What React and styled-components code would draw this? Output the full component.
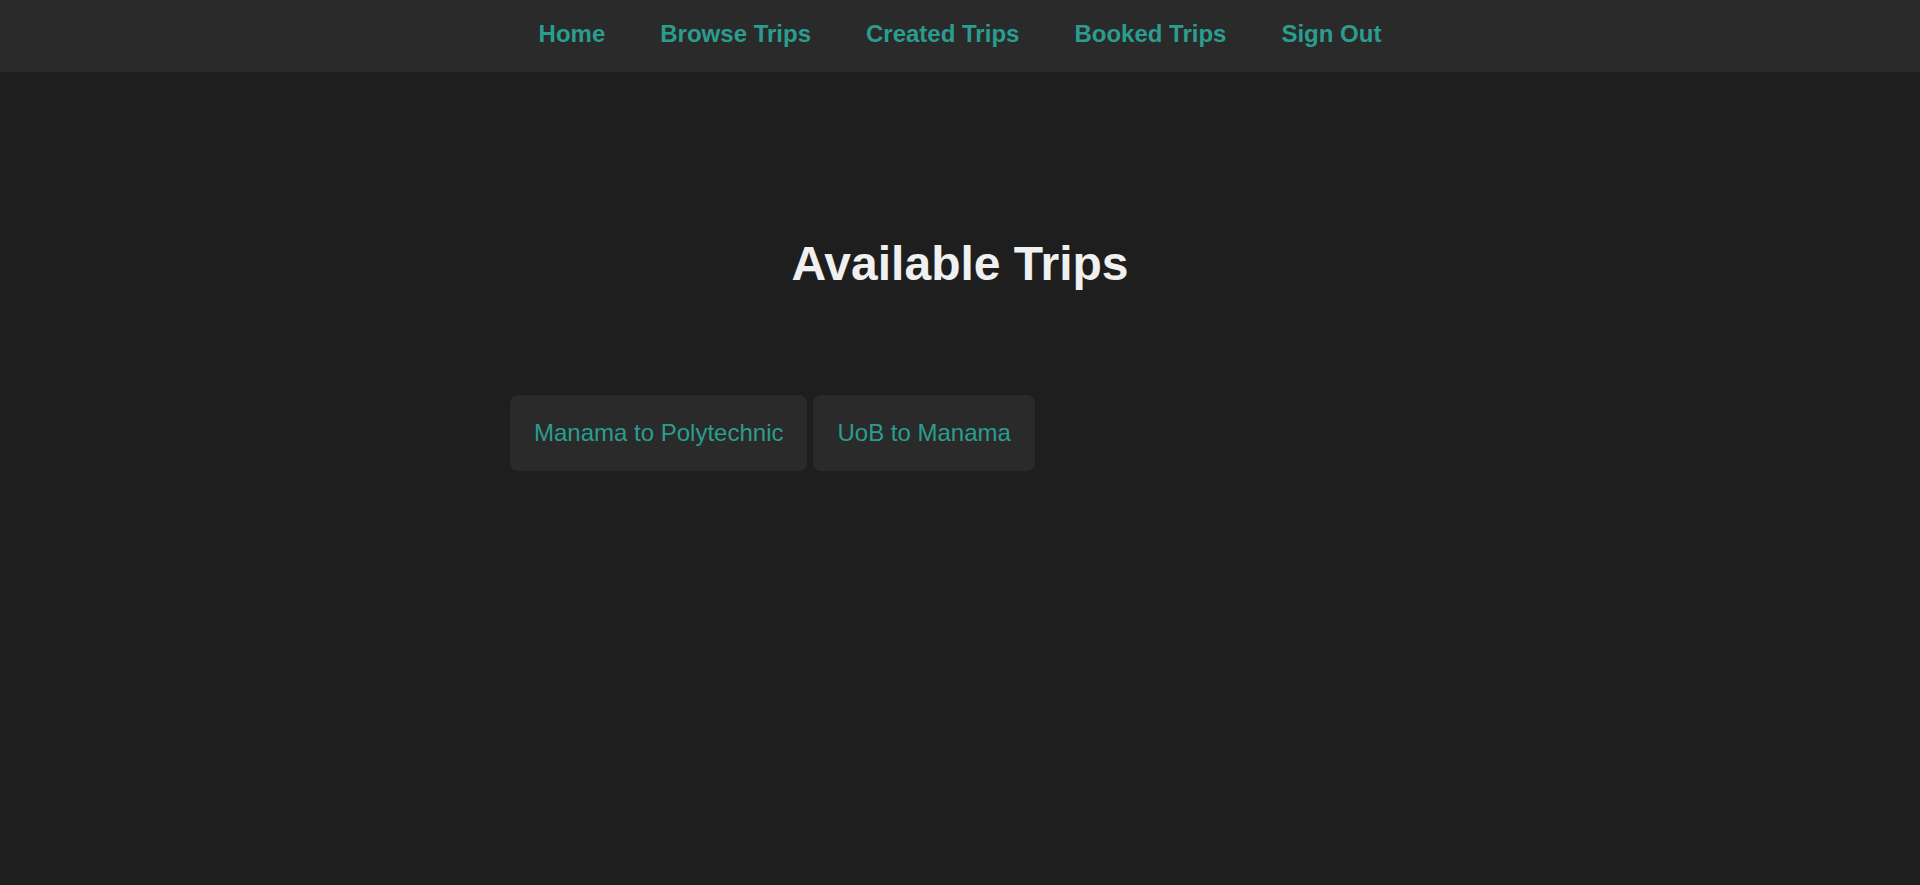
import React from "react";
import styled, { createGlobalStyle } from "styled-components";

const GlobalStyle = createGlobalStyle`
  html, body {
    margin: 0;
    padding: 0;
    background: #1e1e1e;
    font-family: "Liberation Sans", Arial, sans-serif;
  }
  #root {
    min-height: 100vh;
  }
`;

const Page = styled.div`
  min-height: 100vh;
  background: #1e1e1e;
  color: #f0f0f0;
`;

const NavBar = styled.nav`
  display: flex;
  justify-content: center;
  align-items: center;
  gap: 55px;
  padding: 20px 0 24px;
  background: #2a2a2a;
`;

const NavLink = styled.a`
  color: #2a9d8f;
  font-size: 24px;
  font-weight: 700;
  text-decoration: none;
  line-height: normal;
  cursor: pointer;
`;

const Main = styled.main`
  width: 900px;
  margin: 0 auto;
  padding-top: 164px;
`;

const Title = styled.h1`
  margin: 0 0 104px;
  text-align: center;
  font-size: 48px;
  font-weight: 700;
  line-height: normal;
  color: #f0f0f0;
`;

const TripList = styled.div`
  display: flex;
  flex-wrap: wrap;
  gap: 6px;
`;

const TripCard = styled.div`
  background: #2a2a2a;
  border-radius: 8px;
  padding: 24px;
  color: #2a9d8f;
  font-size: 24px;
  line-height: normal;
  cursor: pointer;
`;

const links = ["Home", "Browse Trips", "Created Trips", "Booked Trips", "Sign Out"];
const trips = ["Manama to Polytechnic", "UoB to Manama"];

export default function App() {
  return (
    <Page>
      <GlobalStyle />
      <NavBar>
        {links.map((l) => (
          <NavLink key={l}>{l}</NavLink>
        ))}
      </NavBar>
      <Main>
        <Title>Available Trips</Title>
        <TripList>
          {trips.map((t) => (
            <TripCard key={t}>{t}</TripCard>
          ))}
        </TripList>
      </Main>
    </Page>
  );
}
